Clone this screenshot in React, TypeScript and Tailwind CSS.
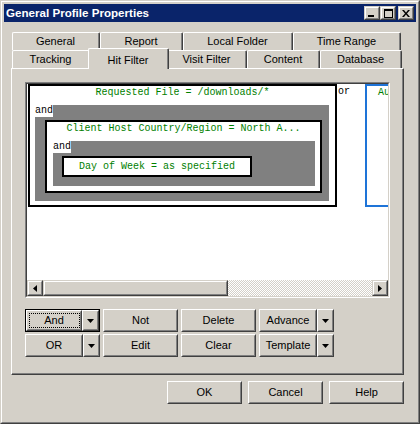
import React from "react";

const F = "font-['Liberation_Sans',Arial,sans-serif]";
const M = "font-['Liberation_Mono','Courier_New',monospace]";

function Raised({ className = "", children }: { className?: string; children?: React.ReactNode }) {
  return (
    <div className={`border border-t-white border-l-white border-r-[#404040] border-b-[#404040] bg-[#d4d0c8] ${className}`}>
      <div className="w-full h-full border border-t-[#d4d0c8] border-l-[#d4d0c8] border-r-[#808080] border-b-[#808080] flex items-center justify-center">
        {children}
      </div>
    </div>
  );
}

function RaisedSmall({ className = "", children }: { className?: string; children?: React.ReactNode }) {
  return (
    <div className={`border border-t-[#d4d0c8] border-l-[#d4d0c8] border-r-[#404040] border-b-[#404040] bg-[#d4d0c8] ${className}`}>
      <div className="w-full h-full border border-t-white border-l-white border-r-[#808080] border-b-[#808080] flex items-center justify-center">
        {children}
      </div>
    </div>
  );
}

function DownArrow() {
  return (
    <svg width="7" height="4" viewBox="0 0 7 4">
      <path d="M0 0h7L3.5 4z" fill="#000" />
    </svg>
  );
}

function Tab({ label, className = "" }: { label: string; className?: string }) {
  return (
    <div className={`h-[18px] shrink-0 border-t border-l border-r border-t-white border-l-white border-r-[#404040] rounded-t-[2px] ${className}`}>
      <div className="h-full border-r border-r-[#808080] flex items-center justify-center text-[11px] text-black">
        {label}
      </div>
    </div>
  );
}

function Btn({ label, className = "" }: { label: string; className?: string }) {
  return (
    <Raised className={`h-[23px] w-[75px] ${className}`}>
      <span className="text-[11px] text-black leading-none">{label}</span>
    </Raised>
  );
}

function SplitBtn({ label, isDefault = false }: { label: string; isDefault?: boolean }) {
  return (
    <div className={`flex h-[23px] w-[75px] ${isDefault ? "border border-black" : ""}`}>
      <Raised className="h-full flex-1">
        {isDefault ? (
          <span className="border border-dotted border-black w-[51px] h-[15px] flex items-center justify-center text-[11px] text-black leading-none">
            {label}
          </span>
        ) : (
          <span className="text-[11px] text-black leading-none">{label}</span>
        )}
      </Raised>
      <Raised className="h-full w-[17px]">
        <DownArrow />
      </Raised>
    </div>
  );
}

export default function App() {
  return (
    <div className={`w-[420px] h-[424px] bg-[#d4d0c8] border border-t-[#d4d0c8] border-l-[#d4d0c8] border-r-[#404040] border-b-[#404040] ${F}`}>
      <div className="w-full h-full border border-t-white border-l-white border-r-[#808080] border-b-[#808080] p-[2px] flex flex-col">
        {/* Title bar */}
        <div className="h-[18px] bg-[#0a246a] flex items-center justify-between pl-[2px] pr-[2px]">
          <span className="text-white font-bold text-[11.6px] leading-none">General Profile Properties</span>
          <div className="flex items-center">
            <RaisedSmall className="w-[16px] h-[14px]">
              <svg width="8" height="7" viewBox="0 0 8 7">
                <rect x="0" y="5" width="6" height="2" fill="#000" />
              </svg>
            </RaisedSmall>
            <RaisedSmall className="w-[16px] h-[14px]">
              <svg width="9" height="9" viewBox="0 0 9 9">
                <path d="M0 0h9v9H0z M1 2v6h7V2z" fill="#000" fillRule="evenodd" />
              </svg>
            </RaisedSmall>
            <RaisedSmall className="w-[16px] h-[14px] ml-[2px]">
              <svg width="8" height="7" viewBox="0 0 8 7">
                <path d="M0 0h2l2 2.5L6 0h2L5 3.5 8 7H6L4 4.5 2 7H0l3-3.5z" fill="#000" />
              </svg>
            </RaisedSmall>
          </div>
        </div>

        {/* Body */}
        <div className="pl-[7px] pt-[10px] flex flex-col">
          {/* back row */}
          <div className="flex pl-[1px]">
            <Tab label="General" className="w-[88px]" />
            <Tab label="Report" className="w-[83px]" />
            <Tab label="Local Folder" className="w-[110px]" />
            <Tab label="Time Range" className="w-[108px]" />
          </div>
          {/* front row */}
          <div className="flex items-end h-[18px] pl-[1px] relative z-10">
            <Tab label="Tracking" className="w-[78px]" />
            <div className="h-[21px] w-[81px] -ml-[2px] -mr-[2px] -mb-[1px] shrink-0 bg-[#d4d0c8] border-t border-l border-r border-t-white border-l-white border-r-[#404040] rounded-t-[2px] relative z-10">
              <div className="h-full border-r border-r-[#808080] flex items-start pt-[3px] justify-center text-[11px] text-black">
                Hit Filter
              </div>
            </div>
            <Tab label="Visit Filter" className="w-[80px]" />
            <Tab label="Content" className="w-[73px]" />
            <Tab label="Database" className="w-[82px]" />
          </div>

          {/* Panel */}
          <div className="w-[393px] h-[307px] border border-t-white border-l-white border-r-[#404040] border-b-[#404040]">
            <div className="w-full h-full border-r border-b border-r-[#808080] border-b-[#808080] pt-[13px] pl-[13px] flex flex-col">
              {/* canvas */}
              <div className="w-[365px] h-[216px] border border-t-[#808080] border-l-[#808080] border-r-white border-b-white">
                <div className="w-full h-full border border-t-[#404040] border-l-[#404040] border-r-[#d4d0c8] border-b-[#d4d0c8] bg-white flex flex-col overflow-hidden">
                  <div className={`flex-1 flex items-start overflow-hidden ${M} text-[10px]`}>
                    {/* outer box */}
                    <div className="ml-[1px] w-[309px] h-[123px] shrink-0 border-2 border-black bg-white flex flex-col">
                      <div className="h-[14px] leading-[14px] text-center text-[#008000] whitespace-nowrap">
                        Requested File = /downloads/*
                      </div>
                      <div className="mt-[5px] ml-[5px] w-[294px] h-[96px] bg-[#808080] relative pt-[15px] pl-[10px]">
                        <div className="absolute left-0 top-0 w-[18px] h-[12px] bg-white text-black leading-[12px]">and</div>
                        <div className="w-[277px] h-[73px] border-2 border-black bg-white flex flex-col">
                          <div className="h-[14px] leading-[14px] text-center text-[#008000] whitespace-nowrap">
                            Client Host Country/Region = North A...
                          </div>
                          <div className="mt-[5px] ml-[6px] w-[262px] h-[45px] bg-[#808080] relative pt-[15px] pl-[9px]">
                            <div className="absolute left-0 top-0 w-[18px] h-[12px] bg-white text-black leading-[12px]">and</div>
                            <div className="w-[190px] h-[21px] border-2 border-black bg-white flex items-center justify-center text-[#008000] whitespace-nowrap">
                              Day of Week = as specified
                            </div>
                          </div>
                        </div>
                      </div>
                    </div>
                    {/* or */}
                    <div className="ml-[1px] mt-[2px] leading-[12px] text-black shrink-0">or</div>
                    {/* blue box */}
                    <div className="ml-[15px] w-[200px] h-[123px] shrink-0 border-2 border-[#1e74d8] bg-white">
                      <div className="pl-[11px] h-[14px] leading-[14px] text-[#008000] whitespace-nowrap">
                        Au
                      </div>
                    </div>
                  </div>
                  {/* scrollbar */}
                  <div className="h-[16px] flex shrink-0">
                    <RaisedSmall className="w-[16px] h-[16px] shrink-0">
                      <svg width="4" height="7" viewBox="0 0 4 7">
                        <path d="M4 0v7L0 3.5z" fill="#000" />
                      </svg>
                    </RaisedSmall>
                    <RaisedSmall className="w-[185px] h-[16px] shrink-0" />
                    <div className="flex-1 h-[16px] bg-[repeating-conic-gradient(#d4d0c8_0_25%,#ffffff_0_50%)] bg-[length:2px_2px]" />
                    <RaisedSmall className="w-[16px] h-[16px] shrink-0">
                      <svg width="4" height="7" viewBox="0 0 4 7">
                        <path d="M0 0v7L4 3.5z" fill="#000" />
                      </svg>
                    </RaisedSmall>
                  </div>
                </div>
              </div>

              {/* filter buttons */}
              <div className="mt-[11px] flex flex-col gap-[2px]">
                <div className="flex gap-[3px]">
                  <SplitBtn label="And" isDefault />
                  <Btn label="Not" />
                  <Btn label="Delete" />
                  <SplitBtn label="Advance" />
                </div>
                <div className="flex gap-[3px]">
                  <SplitBtn label="OR" />
                  <Btn label="Edit" />
                  <Btn label="Clear" />
                  <SplitBtn label="Template" />
                </div>
              </div>
            </div>
          </div>

          {/* bottom buttons */}
          <div className="mt-[6px] w-[393px] flex justify-end gap-[6px]">
            <Btn label="OK" />
            <Btn label="Cancel" />
            <Btn label="Help" />
          </div>
        </div>
      </div>
    </div>
  );
}
